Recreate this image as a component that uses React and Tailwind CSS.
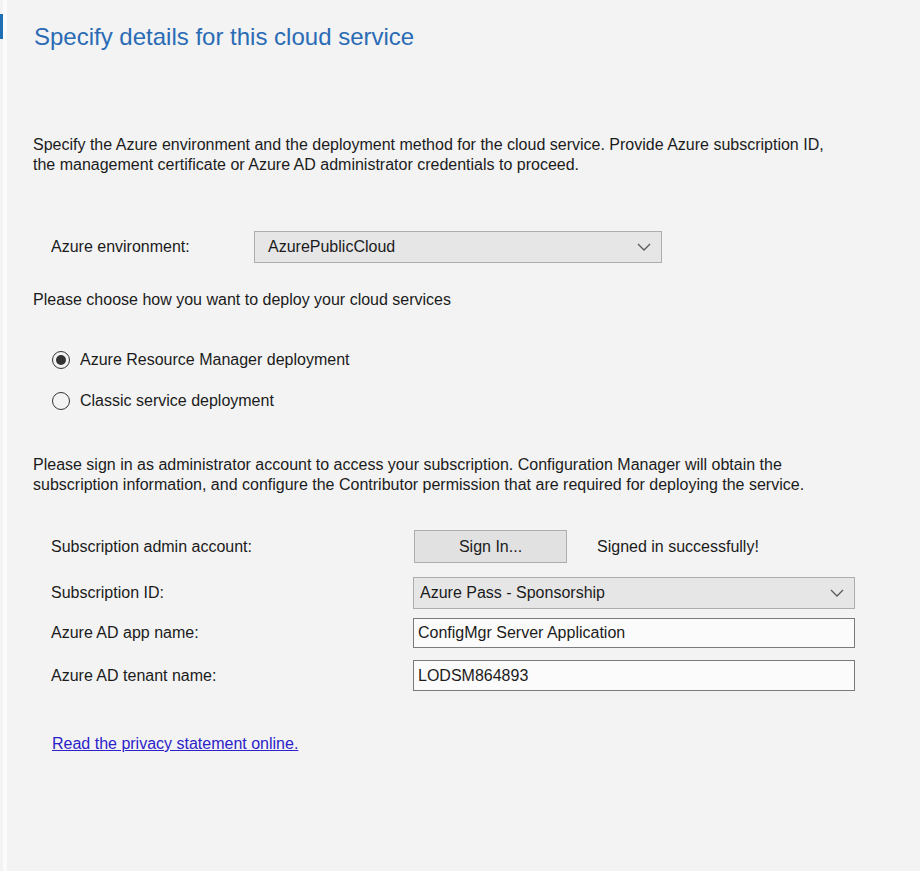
const Chevron = () => (
  <svg width="14" height="8" viewBox="0 0 14 8" fill="none" className="shrink-0">
    <path d="M1 1l6 6 6-6" stroke="#5a5a5a" strokeWidth="1.3" />
  </svg>
)

const Select = ({ value, className }) => (
  <div
    className={`flex items-center justify-between border border-[#adadad] bg-[#e6e6e6] pr-[10px] ${className}`}
  >
    <span>{value}</span>
    <Chevron />
  </div>
)

const TextBox = ({ value, className }) => (
  <div className={`flex items-center border border-[#7a7a7a] bg-[#fbfbfb] pl-[4px] ${className}`}>
    {value}
  </div>
)

const Radio = ({ checked, label, className }) => (
  <div className={`flex h-[22px] items-center ${className}`}>
    <span className="flex h-[18px] w-[18px] items-center justify-center rounded-full border border-[#333]">
      {checked && <span className="h-[10px] w-[10px] rounded-full bg-[#333]" />}
    </span>
    <span className="ml-[10px]">{label}</span>
  </div>
)

const Row = ({ label, children, className }) => (
  <div className={`flex items-center ${className}`}>
    <span className="w-[380px] shrink-0 pl-[18px]">{label}</span>
    {children}
  </div>
)

export default function App() {
  return (
    <div
      className="flex h-[871px] w-[920px] bg-[#f3f3f3] text-[16px] text-[#1b1b1b]"
      style={{ fontFamily: '"Liberation Sans", Arial, sans-serif' }}
    >
      <div className="w-[3px] shrink-0">
        <div className="mt-[14px] h-[25px] bg-[#1f6fb5]" />
      </div>
      <div className="w-[4px] shrink-0 bg-[#fbfbfb]" />

      <div className="flex flex-1 flex-col pl-[26px]">
        <h1 className="mt-[22px] pl-[1px] text-[24px] leading-[30px] text-[#2a6bb5]">
          Specify details for this cloud service
        </h1>

        <p className="mt-[83px] leading-[20px]">
          Specify the Azure environment and the deployment method for the cloud service. Provide Azure subscription ID,
          <br />
          the management certificate or Azure AD administrator credentials to proceed.
        </p>

        <div className="mt-[56px] flex h-[32px] items-center">
          <span className="w-[221px] shrink-0 pl-[18px]">Azure environment:</span>
          <Select value="AzurePublicCloud" className="h-[32px] w-[408px] pl-[13px]" />
        </div>

        <p className="mt-[27px] leading-[20px]">Please choose how you want to deploy your cloud services</p>

        <Radio checked label="Azure Resource Manager deployment" className="mt-[39px] pl-[19px]" />
        <Radio label="Classic service deployment" className="mt-[19px] pl-[19px]" />

        <p className="mt-[43px] leading-[20px]">
          Please sign in as administrator account to access your subscription. Configuration Manager will obtain the
          <br />
          subscription information, and configure the Contributor permission that are required for deploying the service.
        </p>

        <Row label="Subscription admin account:" className="mt-[35px] h-[33px]">
          <div className="ml-[1px] flex h-[33px] w-[153px] items-center justify-center border border-[#adadad] bg-[#e1e1e1]">
            Sign In...
          </div>
          <span className="ml-[30px]">Signed in successfully!</span>
        </Row>

        <Row label="Subscription ID:" className="mt-[14px] h-[32px]">
          <Select value="Azure Pass - Sponsorship" className="h-[32px] w-[442px] pl-[6px]" />
        </Row>

        <Row label="Azure AD app name:" className="mt-[9px] h-[30px]">
          <TextBox value="ConfigMgr Server Application" className="h-[30px] w-[442px]" />
        </Row>

        <Row label="Azure AD tenant name:" className="mt-[12px] h-[31px]">
          <TextBox value="LODSM864893" className="h-[31px] w-[442px]" />
        </Row>

        <a href="#" className="mt-[43px] ml-[19px] self-start leading-[20px] text-[#2b22c9] underline">
          Read the privacy statement online.
        </a>
      </div>
    </div>
  )
}
